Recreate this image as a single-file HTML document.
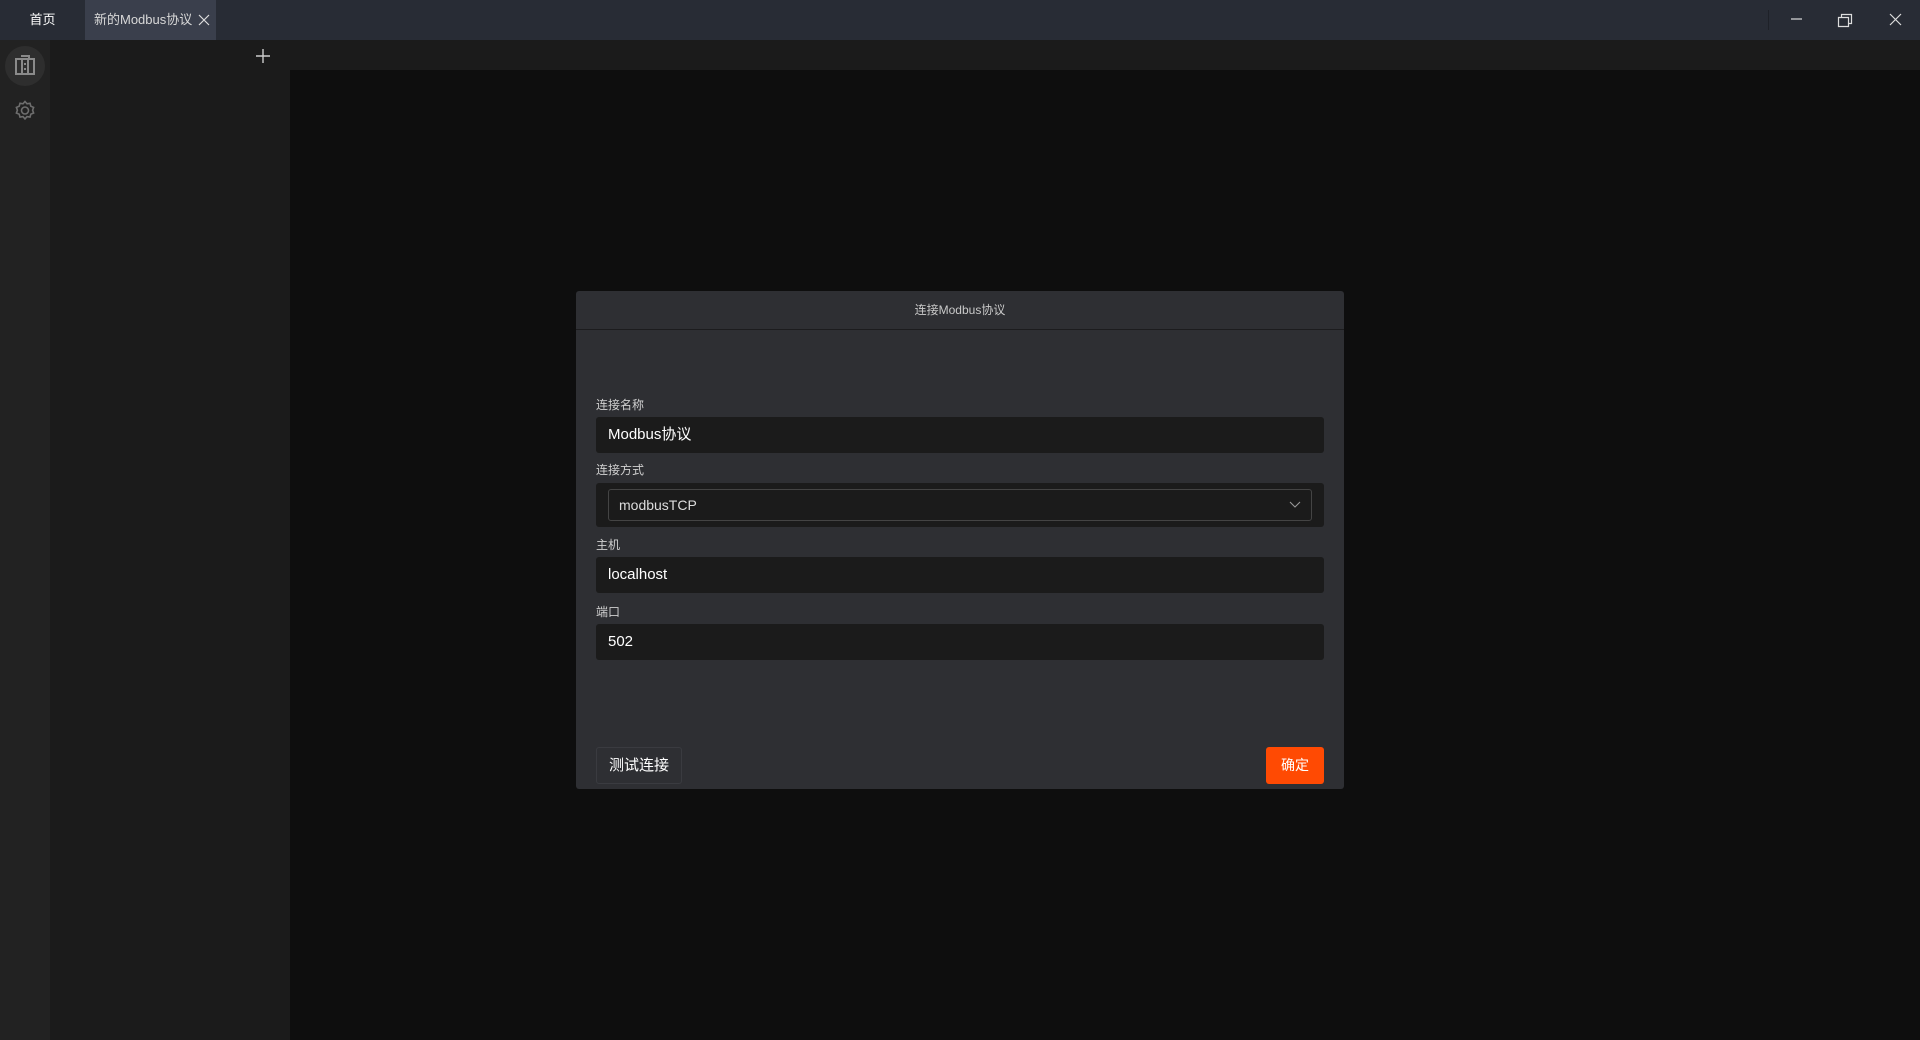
<!DOCTYPE html>
<html><head><meta charset="utf-8"><style>
*{margin:0;padding:0;box-sizing:border-box}
body{width:1920px;height:1040px;overflow:hidden;background:#0e0e0e;font-family:"Liberation Sans","Noto Sans CJK SC",sans-serif;position:relative}
.abs{position:absolute}
.top{left:0;top:0;width:1920px;height:40px;background:#282c35}
.tab{top:0;height:40px;line-height:40px;font-size:13px}
.side{left:0;top:40px;width:50px;height:1000px;background:#222222}
.panel{left:50px;top:40px;width:240px;height:1000px;background:#1b1b1b}
.strip{left:290px;top:40px;width:1630px;height:30px;background:#1b1b1b}
.dlg{left:576px;top:291px;width:768px;height:498px;background:#2e2f33;border-radius:3px}
.hd{left:0;top:0;width:768px;height:39px;border-bottom:1px solid #1c1c1e;text-align:center;line-height:39px;color:#c9c9c9;font-size:12px}
.lbl{left:20px;color:#d0d0d0;font-size:12px}
.inp{left:20px;width:728px;height:36px;background:#1b1b1b;border-radius:3px;color:#fff;font-size:15px;line-height:36px;padding-left:12px}
</style></head><body>
<div class="abs top"></div>
<div class="abs tab" style="left:0;width:85px;text-align:center;color:#fff">首页</div>
<div class="abs tab" style="left:85px;width:131px;background:#3a3f4c;color:#d8d8d8;padding-left:9px">新的Modbus协议
<svg class="abs" style="left:113px;top:14px" width="12" height="12"><path d="M1 1L11 11M11 1L1 11" stroke="#ddd" stroke-width="1.2"/></svg></div>
<div class="abs" style="left:1768px;top:10px;width:1px;height:20px;background:#1e2128"></div>
<svg class="abs" style="left:1790px;top:12px" width="16" height="16"><path d="M1 7H12" stroke="#ddd" stroke-width="1.2"/></svg>
<svg class="abs" style="left:1837px;top:12px" width="16" height="16"><path d="M1.5 5.5H11.5V14.5H1.5Z M4.5 5.5V2.5H14.5V11.5H11.5" stroke="#ddd" stroke-width="1.2" fill="none"/></svg>
<svg class="abs" style="left:1888px;top:12px" width="16" height="16"><path d="M2 2L13 13M13 2L2 13" stroke="#ddd" stroke-width="1.2"/></svg>
<div class="abs side"></div>
<div class="abs" style="left:5px;top:46px;width:40px;height:40px;border-radius:50%;background:#2e2e2e"></div>
<svg class="abs" style="left:14px;top:54px" width="22" height="22"><g fill="none" stroke="#8a8a8a" stroke-width="2"><rect x="2" y="5" width="18" height="15"/><path d="M7 2H15V5M8 5V20M14 5V20"/></g><g fill="#8a8a8a"><rect x="10" y="9" width="2" height="2"/><rect x="10" y="14" width="2" height="2"/></g></svg>
<svg class="abs" style="left:13px;top:99px" width="24" height="24"><path d="M12 2.5l2 2.3 3-.5.8 2.9 2.8 1.2-1 2.8 1 2.8-2.8 1.2-.8 2.9-3-.5-2 2.3-2-2.3-3 .5-.8-2.9-2.8-1.2 1-2.8-1-2.8 2.8-1.2.8-2.9 3 .5z" fill="none" stroke="#6e6e6e" stroke-width="1.6"/><circle cx="12" cy="11.5" r="3.5" fill="none" stroke="#6e6e6e" stroke-width="1.6"/></svg>
<div class="abs panel"></div>
<div class="abs strip"></div>
<svg class="abs" style="left:256px;top:49px" width="14" height="14"><path d="M7 0V14M0 7H14" stroke="#ccc" stroke-width="1.4"/></svg>
<div class="abs dlg">
<div class="abs hd">连接Modbus协议</div>
<div class="abs lbl" style="top:105px">连接名称</div>
<div class="abs inp" style="top:126px">Modbus协议</div>
<div class="abs lbl" style="top:170px">连接方式</div>
<div class="abs" style="left:20px;top:192px;width:728px;height:44px;background:#1b1b1b;border-radius:3px"></div>
<div class="abs" style="left:32px;top:198px;width:704px;height:32px;border:1px solid #444;border-radius:3px;color:#ddd;font-size:14px;line-height:30px;padding-left:10px">modbusTCP
<svg class="abs" style="right:10px;top:10px" width="12" height="10"><path d="M1 2L6 7L11 2" stroke="#999" fill="none" stroke-width="1.1"/></svg></div>
<div class="abs lbl" style="top:245px">主机</div>
<div class="abs inp" style="top:266px">localhost</div>
<div class="abs lbl" style="top:312px">端口</div>
<div class="abs inp" style="top:333px">502</div>
<div class="abs" style="left:20px;top:456px;width:86px;height:37px;border:1px solid #3a3b40;border-radius:3px;color:#fff;font-size:15px;line-height:35px;text-align:center">测试连接</div>
<div class="abs" style="left:690px;top:456px;width:58px;height:37px;background:#ff4a03;border-radius:3px;color:#fff;font-size:14px;line-height:37px;text-align:center">确定</div>
</div>
</body></html>
